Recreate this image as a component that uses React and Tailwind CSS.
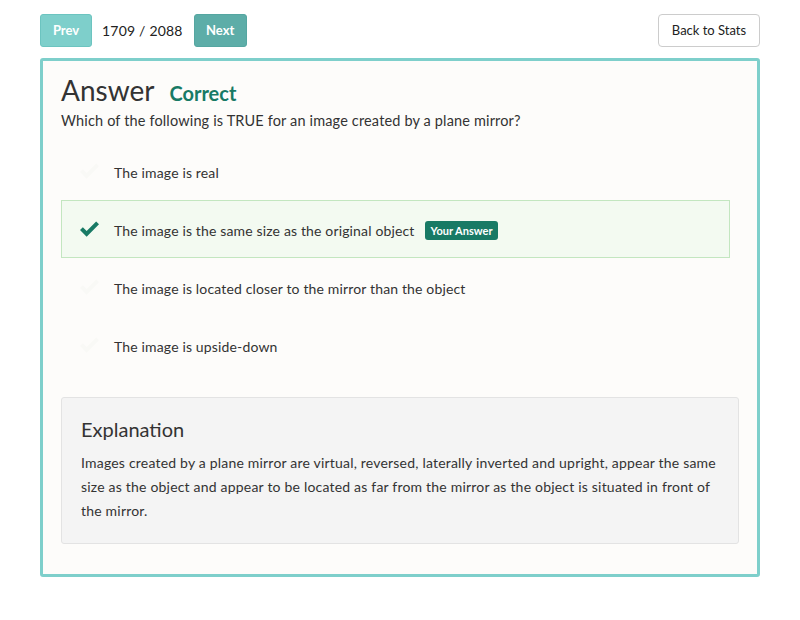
import React from "react";

const Check = ({ className }) => (
  <svg viewBox="0 0 24 20" className={className} fill="currentColor">
    <path d="M2 10.5 L5 7.5 L9 11.5 L19 1.5 L22 4.5 L9 17.5 Z" />
  </svg>
);

const options = [
  { text: "The image is real" },
  { text: "The image is the same size as the original object", correct: true },
  { text: "The image is located closer to the mirror than the object" },
  { text: "The image is upside-down" },
];

export default function App() {
  return (
    <div className="min-h-[620px] bg-white px-10 pt-[14px] text-[#333]" style={{ fontFamily: "Lato, 'Open Sans', sans-serif" }}>
      <div className="flex items-center justify-between">
        <div className="flex items-center">
          <button className="h-[33px] w-[52px] rounded-[3px] border border-[#6cc4c0] bg-[#7ecfcb] text-[13px] font-bold text-white">Prev</button>
          <span className="ml-[10px] mr-[11px] text-[14px] tracking-[0.2px] text-[#222]">1709 / 2088</span>
          <button className="h-[33px] w-[53px] rounded-[3px] border border-[#55a6a1] bg-[#5dada8] text-[13px] font-bold text-white">Next</button>
        </div>
        <button className="h-[33px] w-[102px] rounded-[4px] border border-[#ccc] bg-white text-[13px] text-[#222]">Back to Stats</button>
      </div>

      <div className="mt-[11px] h-[519px] rounded-[3px] border-[3px] border-[#7ecfcb] bg-[#fdfcfa] px-[18px] pt-[10px]">
        <div className="flex items-baseline">
          <h1 className="text-[28px] leading-[38px] text-[#333]">Answer</h1>
          <span className="ml-[15px] text-[20px] font-bold text-[#187a65]">Correct</span>
        </div>
        <p className="mt-[2px] text-[14.5px] leading-[20px] tracking-[0.15px] text-[#333]">Which of the following is TRUE for an image created by a plane mirror?</p>

        <div className="mr-[9px] mt-[11px]">
          {options.map((o) =>
            o.correct ? (
              <div key={o.text} className="flex h-[58px] items-center border border-[#c3e6c0] bg-[#f3faf1] pl-[16px]">
                <Check className="h-[19px] w-[23px] text-[#187a65]" />
                <span className="ml-[13px] mt-[2px] text-[14px] tracking-[0.15px] text-[#333]">{o.text}</span>
                <span className="ml-[10px] mt-[2px] rounded-[3px] bg-[#187a65] px-[6px] py-[2px] text-[11px] font-bold leading-[15px] text-white">Your Answer</span>
              </div>
            ) : (
              <div key={o.text} className="flex h-[58px] items-center border border-transparent pl-[16px]">
                <Check className="h-[19px] w-[23px] text-[#f9f9f6]" />
                <span className="ml-[13px] mt-[3px] text-[14px] tracking-[0.15px] text-[#333]">{o.text}</span>
              </div>
            )
          )}
        </div>

        <div className="mt-[23px] rounded-[3px] border border-[#e3e3e3] bg-[#f4f4f4] px-[19px] pb-[20px] pt-[16px]">
          <h2 className="text-[20px] leading-[30px] text-[#333]">Explanation</h2>
          <p className="mt-[7px] text-[14px] leading-[24px] tracking-[0.2px] text-[#333]">
            Images created by a plane mirror are virtual, reversed, laterally inverted and upright, appear the same size as the object and appear to be located as far from the mirror as the object is situated in front of the mirror.
          </p>
        </div>
      </div>
    </div>
  );
}
